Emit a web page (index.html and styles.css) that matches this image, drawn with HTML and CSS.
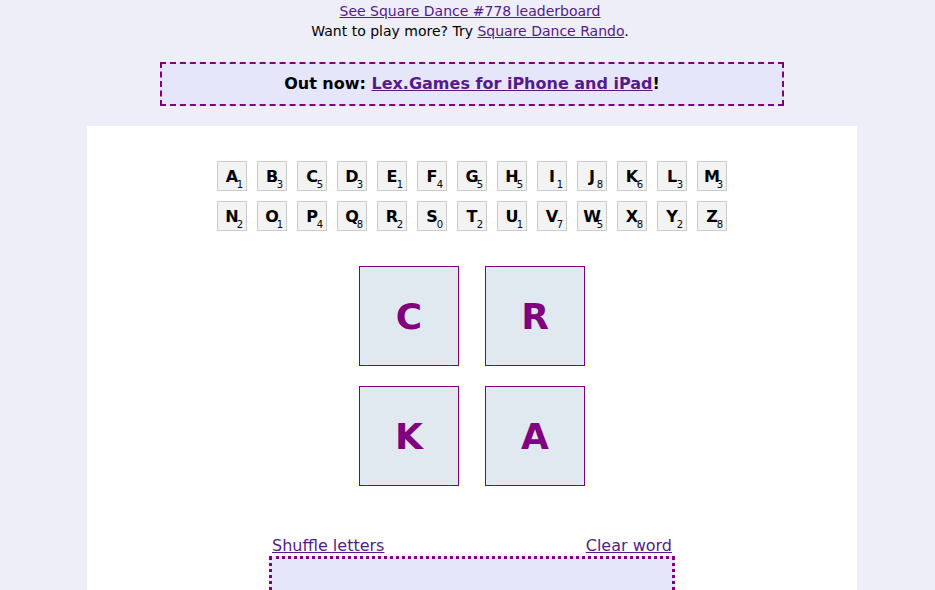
FILE: index.html
```html
<!DOCTYPE html>
<html>
<head>
<meta charset="utf-8">
<link rel="stylesheet" href="styles.css">
</head>
<body>
<div class="page">
  <div class="top">
    <div><a href="#">See Square Dance #778 leaderboard</a></div>
    <div>Want to play more? Try <a href="#">Square Dance Rando</a>.</div>
  </div>
  <div class="banner">Out now: <a href="#">Lex.Games for iPhone and iPad</a>!</div>
  <div class="panel">
    <div class="letters">
      <div class="tile">A<span class="pts">1</span></div>
      <div class="tile">B<span class="pts">3</span></div>
      <div class="tile">C<span class="pts">5</span></div>
      <div class="tile">D<span class="pts">3</span></div>
      <div class="tile">E<span class="pts">1</span></div>
      <div class="tile">F<span class="pts">4</span></div>
      <div class="tile">G<span class="pts">5</span></div>
      <div class="tile">H<span class="pts">5</span></div>
      <div class="tile">I<span class="pts">1</span></div>
      <div class="tile">J<span class="pts">8</span></div>
      <div class="tile">K<span class="pts">6</span></div>
      <div class="tile">L<span class="pts">3</span></div>
      <div class="tile">M<span class="pts">3</span></div>
      <div class="tile">N<span class="pts">2</span></div>
      <div class="tile">O<span class="pts">1</span></div>
      <div class="tile">P<span class="pts">4</span></div>
      <div class="tile">Q<span class="pts">8</span></div>
      <div class="tile">R<span class="pts">2</span></div>
      <div class="tile">S<span class="pts">0</span></div>
      <div class="tile">T<span class="pts">2</span></div>
      <div class="tile">U<span class="pts">1</span></div>
      <div class="tile">V<span class="pts">7</span></div>
      <div class="tile">W<span class="pts">5</span></div>
      <div class="tile">X<span class="pts">8</span></div>
      <div class="tile">Y<span class="pts">2</span></div>
      <div class="tile">Z<span class="pts">8</span></div>
    </div>
    <div class="square">
      <div class="cell">C</div>
      <div class="cell">R</div>
      <div class="cell">K</div>
      <div class="cell">A</div>
    </div>
    <div class="actions">
      <a href="#">Shuffle letters</a>
      <a href="#">Clear word</a>
    </div>
    <div class="word"></div>
  </div>
</div>
</body>
</html>
```
FILE: styles.css
```css
html, body {
  margin: 0;
  padding: 0;
}
body {
  background: #eeeef9;
  font-family: "DejaVu Sans", sans-serif;
  color: #000;
  overflow: hidden;
}
.page {
  padding-left: 9px;
}
a {
  color: #551a8b;
}
.top {
  text-align: center;
  font-size: 14px;
  line-height: 20px;
  padding-top: 1px;
  padding-right: 4px;
}
.banner {
  width: 620px;
  margin: 21px auto 0;
  border: 2px dashed #800080;
  background: #e6e6fa;
  text-align: center;
  font-weight: bold;
  font-size: 16px;
  line-height: 20px;
  padding: 10px 0;
  box-sizing: content-box;
}
.panel {
  width: 770px;
  margin: 20px auto 0;
  background: #fff;
  padding-top: 35px;
  height: 600px;
  display: flex;
  flex-direction: column;
  align-items: center;
}
.letters {
  display: grid;
  grid-template-columns: repeat(13, 30px);
  grid-auto-rows: 30px;
  gap: 10px;
}
.tile {
  position: relative;
  box-sizing: border-box;
  border: 1px solid #cccccc;
  background: #f3f3f3;
  font-weight: bold;
  font-size: 16px;
  line-height: 28px;
  text-align: center;
  padding-top: 1px;
}
.pts {
  position: absolute;
  right: 3px;
  bottom: -1px;
  font-weight: normal;
  font-size: 10px;
  line-height: 12px;
}
.square {
  margin-top: 35px;
  display: grid;
  grid-template-columns: 100px 100px;
  grid-auto-rows: 100px;
  column-gap: 26px;
  row-gap: 20px;
}
.cell {
  box-sizing: border-box;
  border: 1px solid #800080;
  background: #e0e8f0;
  color: #800080;
  font-weight: bold;
  font-size: 36px;
  display: flex;
  align-items: center;
  justify-content: center;
  padding-top: 1px;
}
.actions {
  margin-top: 50px;
  width: 400px;
  display: flex;
  justify-content: space-between;
  font-size: 16px;
  line-height: 20px;
}
.word {
  width: 400px;
  height: 60px;
  border: 3px dotted #800080;
  background: #e6e6fa;
}
```
